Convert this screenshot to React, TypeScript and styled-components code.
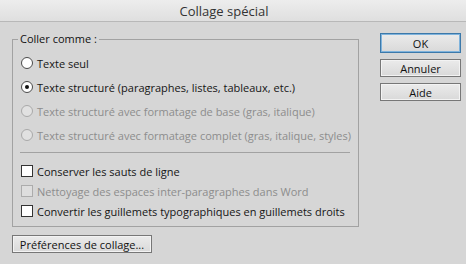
import * as React from 'react'
import styled, { createGlobalStyle } from 'styled-components'

const GlobalStyle = createGlobalStyle`
  html, body {
    margin: 0;
    padding: 0;
  }
  body {
    width: 466px;
    height: 264px;
    overflow: hidden;
    background: #d6d6d6;
    font-family: 'Open Sans', 'Noto Sans', sans-serif;
    font-size: 11px;
    color: #1c1c1c;
  }
`

const Dialog = styled.div`
  width: 466px;
  height: 264px;
  display: flex;
  flex-direction: column;
  background: #d6d6d6;
`

const TitleBar = styled.div`
  height: 21px;
  flex: none;
  border-bottom: 1px solid #b8b8b8;
  background: linear-gradient(#ededed, #dfdfdf);
  display: flex;
  align-items: center;
  justify-content: center;
  padding-right: 18px;
  font-size: 13px;
  color: #333;
`

const Body = styled.div`
  display: flex;
  gap: 21px;
  padding: 9px 5px 0 12px;
`

const Left = styled.div`
  width: 347px;
  display: flex;
  flex-direction: column;
  align-items: flex-start;
  gap: 8px;
`

const Group = styled.fieldset`
  margin: 0;
  width: 100%;
  box-sizing: border-box;
  border: 1px solid #a2a2a2;
  padding: 4px 8px 5px 8px;
  min-width: 0;
`

const Legend = styled.legend`
  margin-left: -3px;
  padding: 0 2px;
  line-height: 16px;
  font-size: 11px;
  color: #111;
`

const Row = styled.label<{ $height: number; $disabled?: boolean }>`
  display: flex;
  align-items: center;
  gap: 4px;
  height: ${(p) => p.$height}px;
  color: ${(p) => (p.$disabled ? '#8d8d8d' : '#151515')};
  white-space: nowrap;
`

const RadioMark = styled.span<{ $checked?: boolean; $disabled?: boolean }>`
  flex: none;
  width: 12px;
  height: 12px;
  box-sizing: border-box;
  border-radius: 50%;
  border: 1px solid ${(p) => (p.$disabled ? '#a9a9a9' : '#4b4b4b')};
  background: ${(p) => (p.$disabled ? '#e1e1e1' : '#fff')};
  display: flex;
  align-items: center;
  justify-content: center;

  &::after {
    content: '';
    width: 4px;
    height: 4px;
    border-radius: 50%;
    background: #111;
    display: ${(p) => (p.$checked ? 'block' : 'none')};
  }
`

const CheckMark = styled.span<{ $disabled?: boolean }>`
  flex: none;
  width: 12px;
  height: 12px;
  box-sizing: border-box;
  border: 1px solid ${(p) => (p.$disabled ? '#acacac' : '#333')};
  background: ${(p) => (p.$disabled ? '#dedede' : '#fff')};
`

const Separator = styled.div`
  height: 1px;
  background: #a2a2a2;
  margin: 5px 0 8px -1px;
`

const Right = styled.div`
  width: 81px;
  display: flex;
  flex-direction: column;
  gap: 6px;
  padding-top: 2px;
`

const Button = styled.button<{ $default?: boolean; $width?: number }>`
  font: inherit;
  font-size: 11px;
  color: #111;
  height: ${(p) => (p.$default ? 20 : 18)}px;
  width: ${(p) => (p.$width ? `${p.$width}px` : '100%')};
  padding: 0;
  border-radius: 0;
  border: 1px solid ${(p) => (p.$default ? '#3c79aa' : '#777')};
  background: linear-gradient(#ebebeb, #d9d9d9);
  box-shadow: inset 0 0 0 1px ${(p) => (p.$default ? '#7fb3dc' : '#f3f3f3')};
  line-height: 1;
`

const radios = [
  { text: 'Texte seul' },
  { text: 'Texte structuré (paragraphes, listes, tableaux, etc.)', checked: true },
  { text: 'Texte structuré avec formatage de base (gras, italique)', disabled: true },
  { text: 'Texte structuré avec formatage complet (gras, italique, styles)', disabled: true },
]

const checks = [
  { text: 'Conserver les sauts de ligne' },
  { text: 'Nettoyage des espaces inter-paragraphes dans Word', disabled: true },
  { text: 'Convertir les guillemets typographiques en guillemets droits' },
]

const App: React.FC = () => {
  return (
    <>
      <GlobalStyle />
      <Dialog>
        <TitleBar>Collage spécial</TitleBar>
        <Body>
          <Left>
            <Group>
              <Legend>Coller comme :</Legend>
              {radios.map((r) => (
                <Row key={r.text} $height={24} $disabled={r.disabled}>
                  <RadioMark $checked={r.checked} $disabled={r.disabled} />
                  {r.text}
                </Row>
              ))}
              <Separator />
              {checks.map((c) => (
                <Row key={c.text} $height={20} $disabled={c.disabled}>
                  <CheckMark $disabled={c.disabled} />
                  {c.text}
                </Row>
              ))}
            </Group>
            <Button $width={140}>Préférences de collage...</Button>
          </Left>
          <Right>
            <Button $default>OK</Button>
            <Button>Annuler</Button>
            <Button>Aide</Button>
          </Right>
        </Body>
      </Dialog>
    </>
  )
}

export default App
